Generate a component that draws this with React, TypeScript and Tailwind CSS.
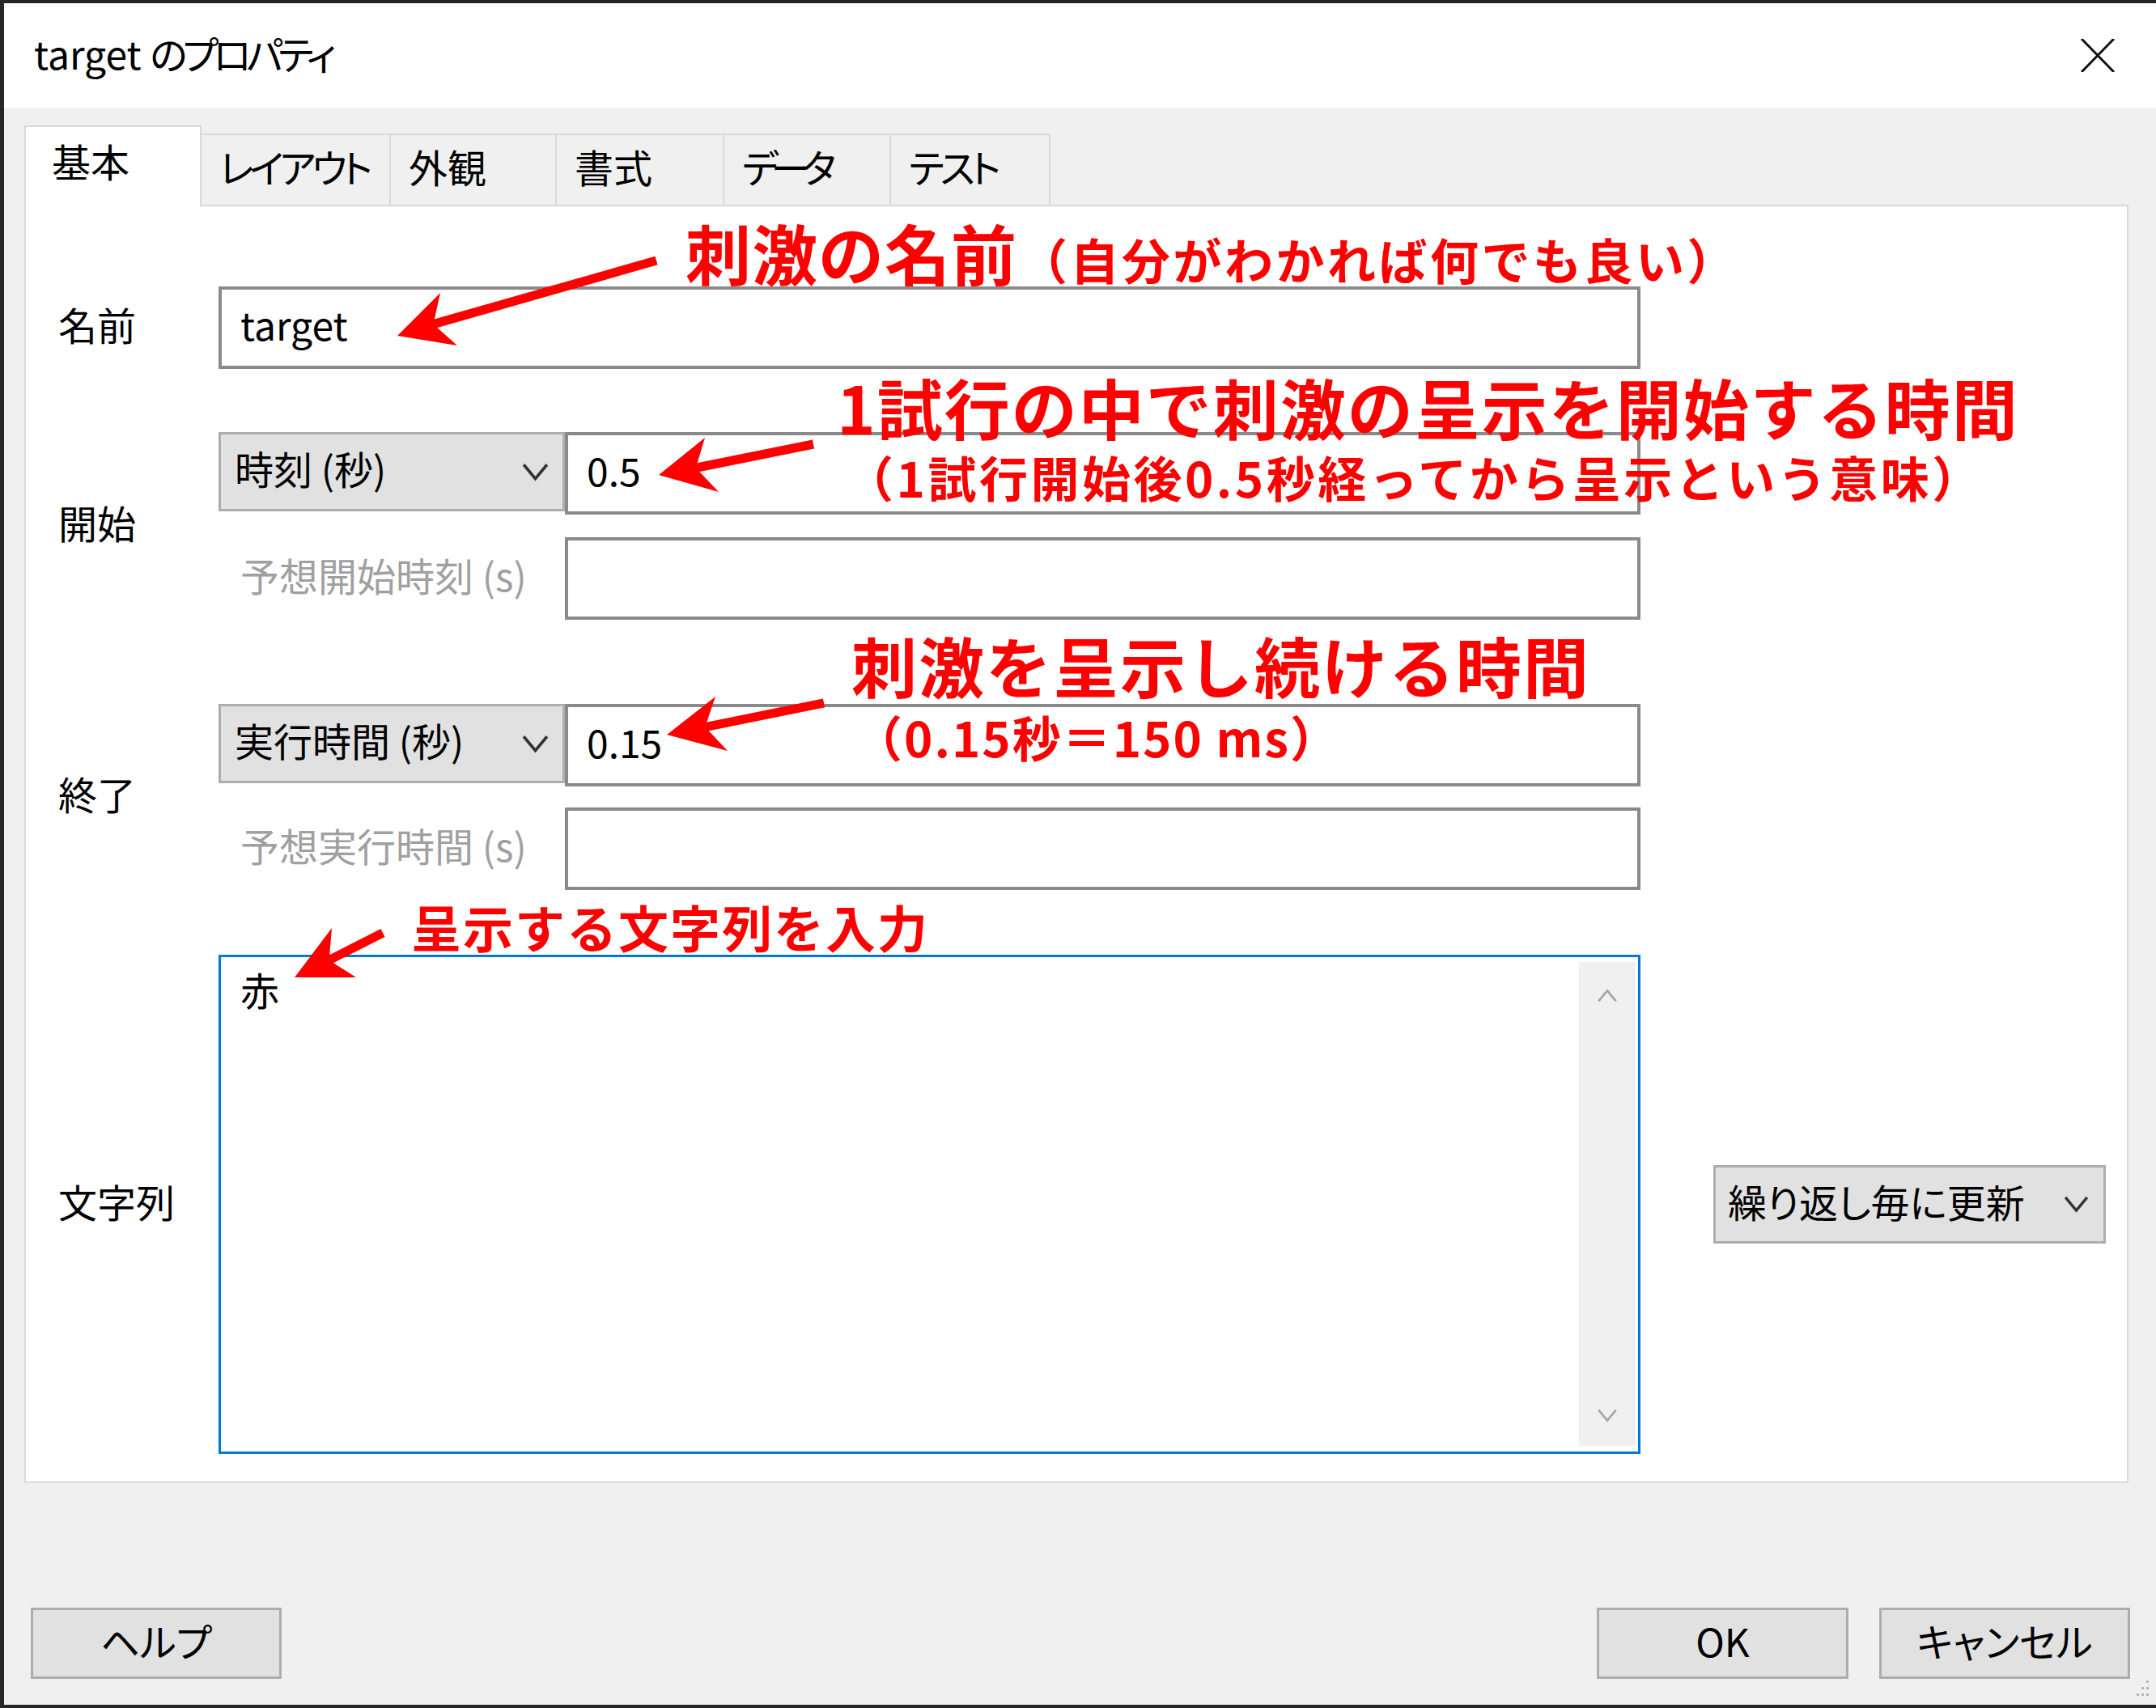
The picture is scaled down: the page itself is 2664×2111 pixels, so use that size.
import React from 'react';

type Pt = [number, number];

// arrow geometry measured on the 2664x2111 page
const ARROWS: { tail: Pt; tip: Pt; b1: Pt; b2: Pt }[] = [
  { tail: [811, 322], tip: [491, 415], b1: [544, 362], b2: [565, 427] },
  { tail: [1005, 549], tip: [814, 587], b1: [871, 541], b2: [888, 608] },
  { tail: [1018, 869], tip: [824, 908], b1: [884, 861], b2: [899, 928] },
  { tail: [473, 1153], tip: [364, 1208], b1: [410, 1147], b2: [440, 1208] },
];

function Chevron({ up = false, className = '' }: { up?: boolean; className?: string }) {
  return (
    <svg viewBox="0 0 34 22" className={className} fill="none">
      <polyline
        points={up ? '3,20 17,3 31,20' : '3,2 17,19 31,2'}
        stroke="currentColor"
        strokeWidth="3.5"
      />
    </svg>
  );
}

function Select({ label, w }: { label: string; w: string }) {
  return (
    <div className={`${w} h-[98px] self-start flex items-center justify-between pl-[17px] pr-[16px] bg-[#e1e1e1] border-[3px] border-[#adadad]`}>
      <span className="pb-[10px]">{label}</span>
      <Chevron className="w-[35px] h-[23px] text-[#333]" />
    </div>
  );
}

function TextBox({ value, w = 'w-[1329px]' }: { value?: string; w?: string }) {
  return (
    <div className={`${w} h-[102px] bg-white border-[4px] border-[#8a8a8a] flex items-center pl-[23px] pb-[10px]`}>
      {value}
    </div>
  );
}

function Tab({ label, w, active = false, track = '' }: { label: string; w: string; active?: boolean; track?: string }) {
  if (active) {
    return (
      <div className={`${w} h-[100px] -mb-[2px] relative z-10 bg-white border-2 border-b-0 border-[#d9d9d9] flex items-center pl-[32px] pb-[16px]`}>
        {label}
      </div>
    );
  }
  return (
    <div className={`${w} h-[88px] bg-[#f0f0f0] border-2 border-b-0 border-l-0 border-[#d9d9d9] flex items-center pl-[22px] pb-[10px] ${track}`}>
      {label}
    </div>
  );
}

function Button({ label, w = 'w-[310px]' }: { label: string; w?: string }) {
  return (
    <div className={`${w} h-[88px] bg-[#e1e1e1] border-[3px] border-[#adadad] flex items-center justify-center pb-[8px]`}>
      {label}
    </div>
  );
}

export default function App() {
  return (
    <div className="relative w-[2664px] h-[2111px] overflow-hidden bg-[#f0f0f0] border-l-[5px] border-t-[4px] border-b-[4px] border-[#262626] flex flex-col text-black text-[48px] leading-none font-['Noto_Sans_CJK_JP','Noto_Sans',sans-serif] [font-feature-settings:'palt']">
      {/* title bar */}
      <div className="h-[129px] shrink-0 bg-white flex items-center justify-between pl-[37px] pr-[51px]">
        <span className="pb-[8px]">
          target <span className="tracking-[-6px]">のプロパティ</span>
        </span>
        <svg viewBox="0 0 42 41" className="w-[42px] h-[41px]" fill="none">
          <path d="M1 0 L41 41 M41 0 L1 41" stroke="#111" strokeWidth="3" />
        </svg>
      </div>

      {/* tabs + panel */}
      <div className="pl-[25px] pt-[22px] shrink-0">
        <div className="flex items-end h-[98px]">
          <Tab label="基本" w="w-[219px]" active />
          <Tab label="レイアウト" w="w-[234px]" track="tracking-[-5px]" />
          <Tab label="外観" w="w-[205px]" />
          <Tab label="書式" w="w-[207px]" />
          <Tab label="データ" w="w-[206px]" track="tracking-[-9px]" />
          <Tab label="テスト" w="w-[197px]" track="tracking-[-5px]" />
        </div>
        <div className="w-[2600px] h-[1580px] bg-white border-2 border-[#d9d9d9] pl-[40px] pt-[99px] flex flex-col">
          {/* 名前 */}
          <div className="flex items-center">
            <div className="w-[198px] pb-[10px]">名前</div>
            <TextBox value="target" w="w-[1757px]" />
          </div>

          {/* 開始 */}
          <div className="flex items-center mt-[78px]">
            <div className="w-[198px] pb-[10px]">開始</div>
            <div className="flex flex-col">
              <div className="flex h-[102px]">
                <Select label="時刻 (秒)" w="w-[428px]" />
                <TextBox value="0.5" />
              </div>
              <div className="flex items-center mt-[28px]">
                <div className="w-[428px] pl-[27px] pb-[10px] text-[#a0a0a0]">予想開始時刻 (s)</div>
                <TextBox />
              </div>
            </div>
          </div>

          {/* 終了 */}
          <div className="flex items-center mt-[104px]">
            <div className="w-[198px] pb-[10px]">終了</div>
            <div className="flex flex-col">
              <div className="flex h-[102px]">
                <Select label="実行時間 (秒)" w="w-[428px]" />
                <TextBox value="0.15" />
              </div>
              <div className="flex items-center mt-[26px]">
                <div className="w-[428px] pl-[27px] pb-[10px] text-[#a0a0a0]">予想実行時間 (s)</div>
                <TextBox />
              </div>
            </div>
          </div>

          {/* 文字列 */}
          <div className="flex items-center mt-[80px]">
            <div className="w-[198px] pb-[10px]">文字列</div>
            <div className="w-[1757px] h-[617px] bg-white border-[3px] border-[#0078d7] flex">
              <div className="flex-1 pl-[24px] pt-[15px]">赤</div>
              <div className="w-[70px] mt-[6px] mb-[7px] mr-[3px] bg-[#f0f0f0] flex flex-col items-center justify-between pt-[28px] pb-[24px]">
                <Chevron up className="w-[26px] h-[27px] text-[#a6a6a6]" />
                <Chevron className="w-[26px] h-[27px] text-[#a6a6a6]" />
              </div>
            </div>
            <div className="ml-[90px] w-[485px] h-[97px] bg-[#e1e1e1] border-[3px] border-[#adadad] flex items-center justify-between pl-[15px] pr-[16px]">
              <span className="pb-[10px]">繰り返し毎に更新</span>
              <Chevron className="w-[35px] h-[21px] text-[#333]" />
            </div>
          </div>
        </div>
      </div>

      {/* bottom buttons */}
      <div className="flex justify-between mt-[154px] pl-[33px] pr-[32px]">
        <Button label="ヘルプ" />
        <div className="flex gap-[38px]">
          <Button label="OK" w="w-[311px]" />
          <Button label="キャンセル" />
        </div>
      </div>

      {/* size grip */}
      <svg viewBox="0 0 16 24" className="absolute right-[8px] bottom-[6px] w-[16px] h-[24px]" fill="#b5b5b5">
        <rect x="12" y="0" width="3" height="3" />
        <rect x="6" y="8" width="3" height="3" />
        <rect x="12" y="8" width="3" height="3" />
        <rect x="0" y="16" width="3" height="3" />
        <rect x="6" y="16" width="3" height="3" />
        <rect x="12" y="16" width="3" height="3" />
      </svg>

      {/* red annotations */}
      <div className="absolute -left-[5px] -top-[4px] w-[2664px] h-[2111px] pointer-events-none text-[#ff0000] font-bold [font-feature-settings:normal]">
        <svg viewBox="0 0 2664 2111" className="absolute inset-0 w-[2664px] h-[2111px]">
          {ARROWS.map((a, i) => {
            const mid: Pt = [(a.b1[0] + a.b2[0]) / 2, (a.b1[1] + a.b2[1]) / 2];
            const notch: Pt = [a.tip[0] + 0.7 * (mid[0] - a.tip[0]), a.tip[1] + 0.7 * (mid[1] - a.tip[1])];
            return (
              <g key={i} fill="#ff0000">
                <line x1={a.tail[0]} y1={a.tail[1]} x2={notch[0]} y2={notch[1]} stroke="#ff0000" strokeWidth="11" />
                <polygon points={`${a.tip.join(',')} ${a.b1.join(',')} ${notch.join(',')} ${a.b2.join(',')}`} />
              </g>
            );
          })}
        </svg>

        <div className="absolute left-[847px] top-[270px] flex items-baseline whitespace-nowrap">
          <span className="text-[81px] tracking-[1px]">刺激の名前</span>
          <span className="text-[60px] tracking-[3.5px] ml-[2px]">（自分がわかれば何でも良い）</span>
        </div>
        <div className="absolute left-[1034px] top-[461px] text-[81px] tracking-[2px] whitespace-nowrap">1試行の中で刺激の呈示を開始する時間</div>
        <div className="absolute left-[1044px] top-[559px] text-[60px] tracking-[3.5px] whitespace-nowrap">（1試行開始後0.5秒経ってから呈示という意味）</div>
        <div className="absolute left-[1052px] top-[780px] text-[81px] tracking-[2px] whitespace-nowrap">刺激を呈示し続ける時間</div>
        <div className="absolute left-[1055px] top-[880px] text-[60px] tracking-[2px] whitespace-nowrap">（0.15秒＝150 ms）</div>
        <div className="absolute left-[508px] top-[1114px] text-[62px] tracking-[2px] whitespace-nowrap">呈示する文字列を入力</div>
      </div>
    </div>
  );
}
